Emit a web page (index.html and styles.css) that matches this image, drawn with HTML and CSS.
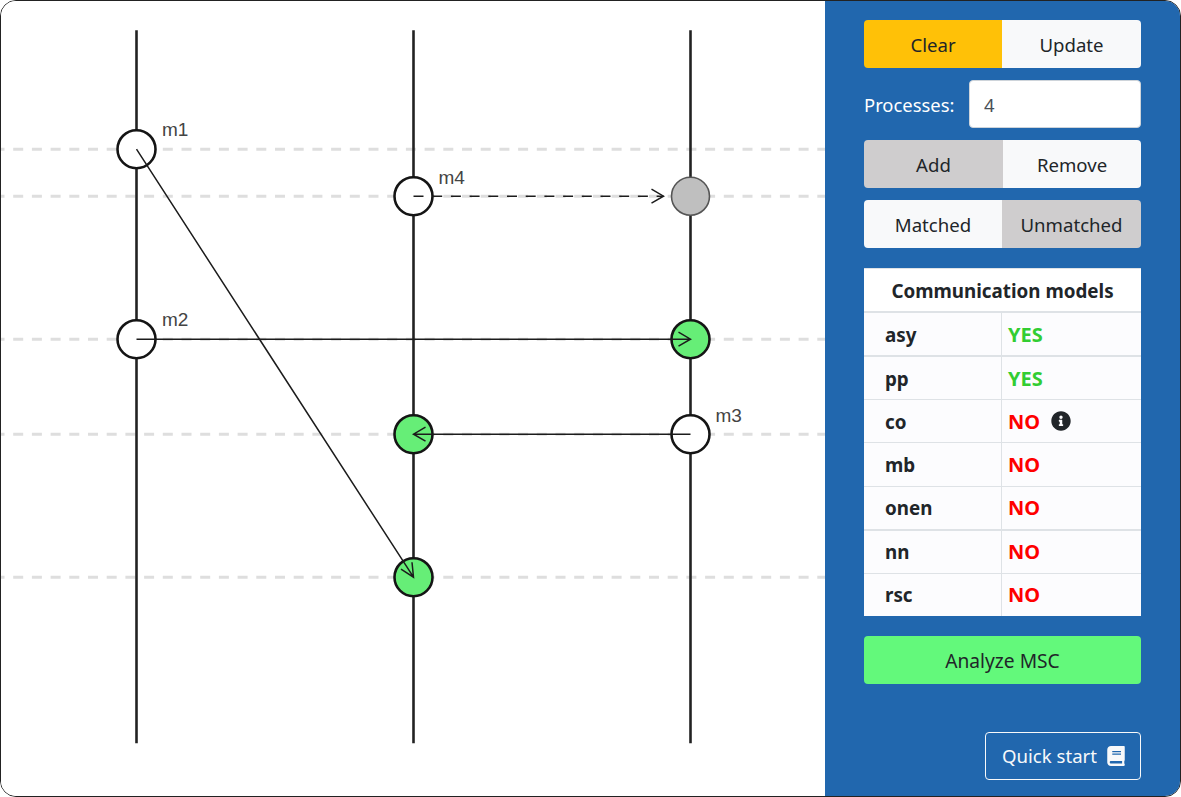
FILE: index.html
```html
<!DOCTYPE html>
<html lang="en">
<head>
<meta charset="utf-8">
<title>MSC</title>
<link rel="stylesheet" href="styles.css">
</head>
<body>
<div class="app">
  <main class="canvas">
    <svg class="diagram" width="824" height="795" viewBox="0 0 824 795" aria-label="Message sequence chart">
      <g transform="translate(-0.5 -0.8)">
        <g class="guide">
          <line x1="0" y1="149" x2="825" y2="149"/>
          <line x1="0" y1="196" x2="825" y2="196"/>
          <line x1="0" y1="339" x2="825" y2="339"/>
          <line x1="0" y1="434" x2="825" y2="434"/>
          <line x1="0" y1="577" x2="825" y2="577"/>
        </g>
        <g class="process">
          <line x1="136" y1="30" x2="136" y2="743"/>
          <line x1="413" y1="30" x2="413" y2="743"/>
          <line x1="690" y1="30" x2="690" y2="743"/>
        </g>
        <g class="event">
          <circle cx="136" cy="149" r="19"/>
          <circle cx="413" cy="196" r="19"/>
          <circle class="pending" cx="690" cy="196" r="19"/>
          <circle cx="136" cy="339" r="19"/>
          <circle class="done" cx="690" cy="339" r="19"/>
          <circle class="done" cx="413" cy="434" r="19"/>
          <circle cx="690" cy="434" r="19"/>
          <circle class="done" cx="413" cy="577" r="19"/>
        </g>
        <g class="msg">
          <path d="M136 149 413 577M400.500 569 413 577 411.500 562"/>
          <path d="M136 339H690M678 332 690 339 678 346"/>
          <path d="M690 434H413M425 427 413 434 425 441"/>
          <path class="lost" d="M413 196H663"/>
          <path d="M651 189 663 196 651 203"/>
        </g>
        <g class="label">
          <text x="161.500" y="136">m1</text>
          <text x="161.500" y="326">m2</text>
          <text x="715" y="422">m3</text>
          <text x="438" y="184">m4</text>
        </g>
      </g>
    </svg>
  </main>
  <aside class="side">
    <div class="group">
      <button class="btn yellow">Clear</button>
      <button class="btn light">Update</button>
    </div>
    <div class="field">
      <label class="field-label" for="procs">Processes:</label>
      <input class="field-input" id="procs" value="4">
    </div>
    <div class="group">
      <button class="btn grey wide">Add</button>
      <button class="btn light">Remove</button>
    </div>
    <div class="group">
      <button class="btn light">Matched</button>
      <button class="btn grey">Unmatched</button>
    </div>
    <div class="models">
      <div class="models-head">Communication models</div>
      <div class="row thick"><div class="name">asy</div><div class="val yes">YES</div></div>
      <div class="row thick"><div class="name">pp</div><div class="val yes">YES</div></div>
      <div class="row"><div class="name">co</div><div class="val no">NO
        <svg class="info" viewBox="0 0 512 512" width="20" height="20"><path d="M256 8C119.043 8 8 119.083 8 256c0 136.997 111.043 248 248 248s248-111.003 248-248C504 119.083 392.957 8 256 8zm0 110c23.196 0 42 18.804 42 42s-18.804 42-42 42-42-18.804-42-42 18.804-42 42-42zm56 254c0 6.627-5.373 12-12 12h-88c-6.627 0-12-5.373-12-12v-24c0-6.627 5.373-12 12-12h12v-64h-12c-6.627 0-12-5.373-12-12v-24c0-6.627 5.373-12 12-12h64c6.627 0 12 5.373 12 12v100h12c6.627 0 12 5.373 12 12v24z"/></svg>
      </div></div>
      <div class="row"><div class="name">mb</div><div class="val no">NO</div></div>
      <div class="row"><div class="name">onen</div><div class="val no">NO</div></div>
      <div class="row thick"><div class="name">nn</div><div class="val no">NO</div></div>
      <div class="row"><div class="name">rsc</div><div class="val no">NO</div></div>
    </div>
    <button class="btn analyze">Analyze MSC</button>
    <div class="foot">
      <button class="quick">Quick start
        <svg class="book" viewBox="0 0 448 512" width="18" height="20"><path d="M448 360V24c0-13.300-10.700-24-24-24H96C43 0 0 43 0 96v320c0 53 43 96 96 96h328c13.300 0 24-10.700 24-24v-16c0-7.500-3.500-14.300-8.900-18.700-4.200-15.400-4.200-59.300 0-74.700 5.400-4.300 8.900-11.100 8.900-18.600zM128 134c0-3.300 2.700-6 6-6h212c3.300 0 6 2.700 6 6v20c0 3.300-2.700 6-6 6H134c-3.300 0-6-2.700-6-6v-20zm0 64c0-3.300 2.700-6 6-6h212c3.300 0 6 2.700 6 6v20c0 3.300-2.700 6-6 6H134c-3.300 0-6-2.700-6-6v-20zm253.400 250H96c-17.700 0-32-14.300-32-32 0-17.600 14.400-32 32-32h285.400c-1.900 17.100-1.900 46.900 0 64z"/></svg>
      </button>
    </div>
  </aside>
</div>
</body>
</html>
```
FILE: styles.css
```css
* { box-sizing: border-box; }
html, body { margin: 0; height: 100%; background: #fff; }
body { font-family: "Noto Sans", "Open Sans", sans-serif; color: #212529; }
.app {
  display: flex;
  width: 1181px;
  height: 797px;
  border: 1px solid #222;
  border-radius: 16px;
  overflow: hidden;
}
.canvas { width: 824px; flex: none; background: #fff; }
.diagram { display: block; }
.guide line { stroke: #dedede; stroke-width: 3; stroke-dasharray: 10 8.7; stroke-dashoffset: 6; }
.process line { stroke: #222; stroke-width: 2.6; }
.event circle { fill: #fff; stroke: #151515; stroke-width: 2.6; }
.event .done { fill: #66ee77; }
.event .pending { fill: #bfbfbf; stroke: #555; stroke-width: 1.6; }
.msg path { fill: none; stroke: #1c1c1c; stroke-width: 1.5; }
.msg .lost { stroke-dasharray: 10 8.7; }
.label text { font-family: "Liberation Sans", Arial, sans-serif; font-size: 19px; fill: #444; }
.side {
  flex: 1;
  display: flex;
  flex-direction: column;
  gap: 12px;
  padding: 19px 39px 16px;
  background: #2167ae;
}
.group { display: flex; height: 48px; border-radius: 4px; overflow: hidden; flex: none; }
.btn {
  font: inherit;
  font-size: 18.600px;
  border: 0;
  height: 48px;
  padding: 1px 0 0;
  color: #212529;
}
.group .btn { flex: 0 0 138px; }
.group .btn + .btn { flex: 1; }
.group .btn.wide { flex-basis: 139px; }
.yellow { background: #ffc107; }
.light { background: #f8f9fa; }
.grey { background: #cfcdce; }
.field { display: flex; align-items: center; justify-content: space-between; height: 48px; flex: none; padding-top: 1px; }
.field-label { color: #fff; font-size: 18.400px; }
.field-input {
  width: 172px;
  height: 48px;
  margin-top: -1px;
  border: 1px solid #ced4da;
  border-radius: 4px;
  padding: 1px 14px 0;
  font: inherit;
  font-size: 18.400px;
  color: #495057;
  background: #fff;
}
.models {
  display: flex;
  flex-direction: column;
  height: 348px;
  margin-top: 8px;
  background: #fcfcfe;
  border-top: 1px solid #dee2e6;
  flex: none;
}
.models-head {
  height: 42px;
  flex: none;
  display: flex;
  align-items: center;
  justify-content: center;
  padding-top: 2px;
  font-size: 18.800px;
  font-weight: 700;
  background: #fff;
}
.row {
  flex: 1;
  display: flex;
  border-top: 1px solid #dee2e6;
  font-size: 18.800px;
  font-weight: 700;
}
.row.thick { border-top-width: 2px; }
.name { width: 138px; flex: none; display: flex; align-items: center; padding: 1px 0 0 21px; border-right: 1px solid #dee2e6; }
.val { flex: 1; display: flex; align-items: center; gap: 11px; padding-left: 6px; font-size: 20px; }
.yes { color: #32cd32; }
.no { color: #f00; }
.info { fill: #212529; }
.analyze { background: #63f97b; border-radius: 4px; flex: none; margin-top: 8px; font-size: 19.200px; }
.foot { margin-top: auto; display: flex; justify-content: flex-end; }
.quick {
  display: flex;
  align-items: center;
  gap: 10px;
  height: 48px;
  padding: 0 15px 2px 16px;
  font: inherit;
  font-size: 18.600px;
  color: #f8f9fa;
  background: transparent;
  border: 1px solid #f8f9fa;
  border-radius: 4px;
}
.book { fill: #f8f9fa; margin-top: 2px; }
```
